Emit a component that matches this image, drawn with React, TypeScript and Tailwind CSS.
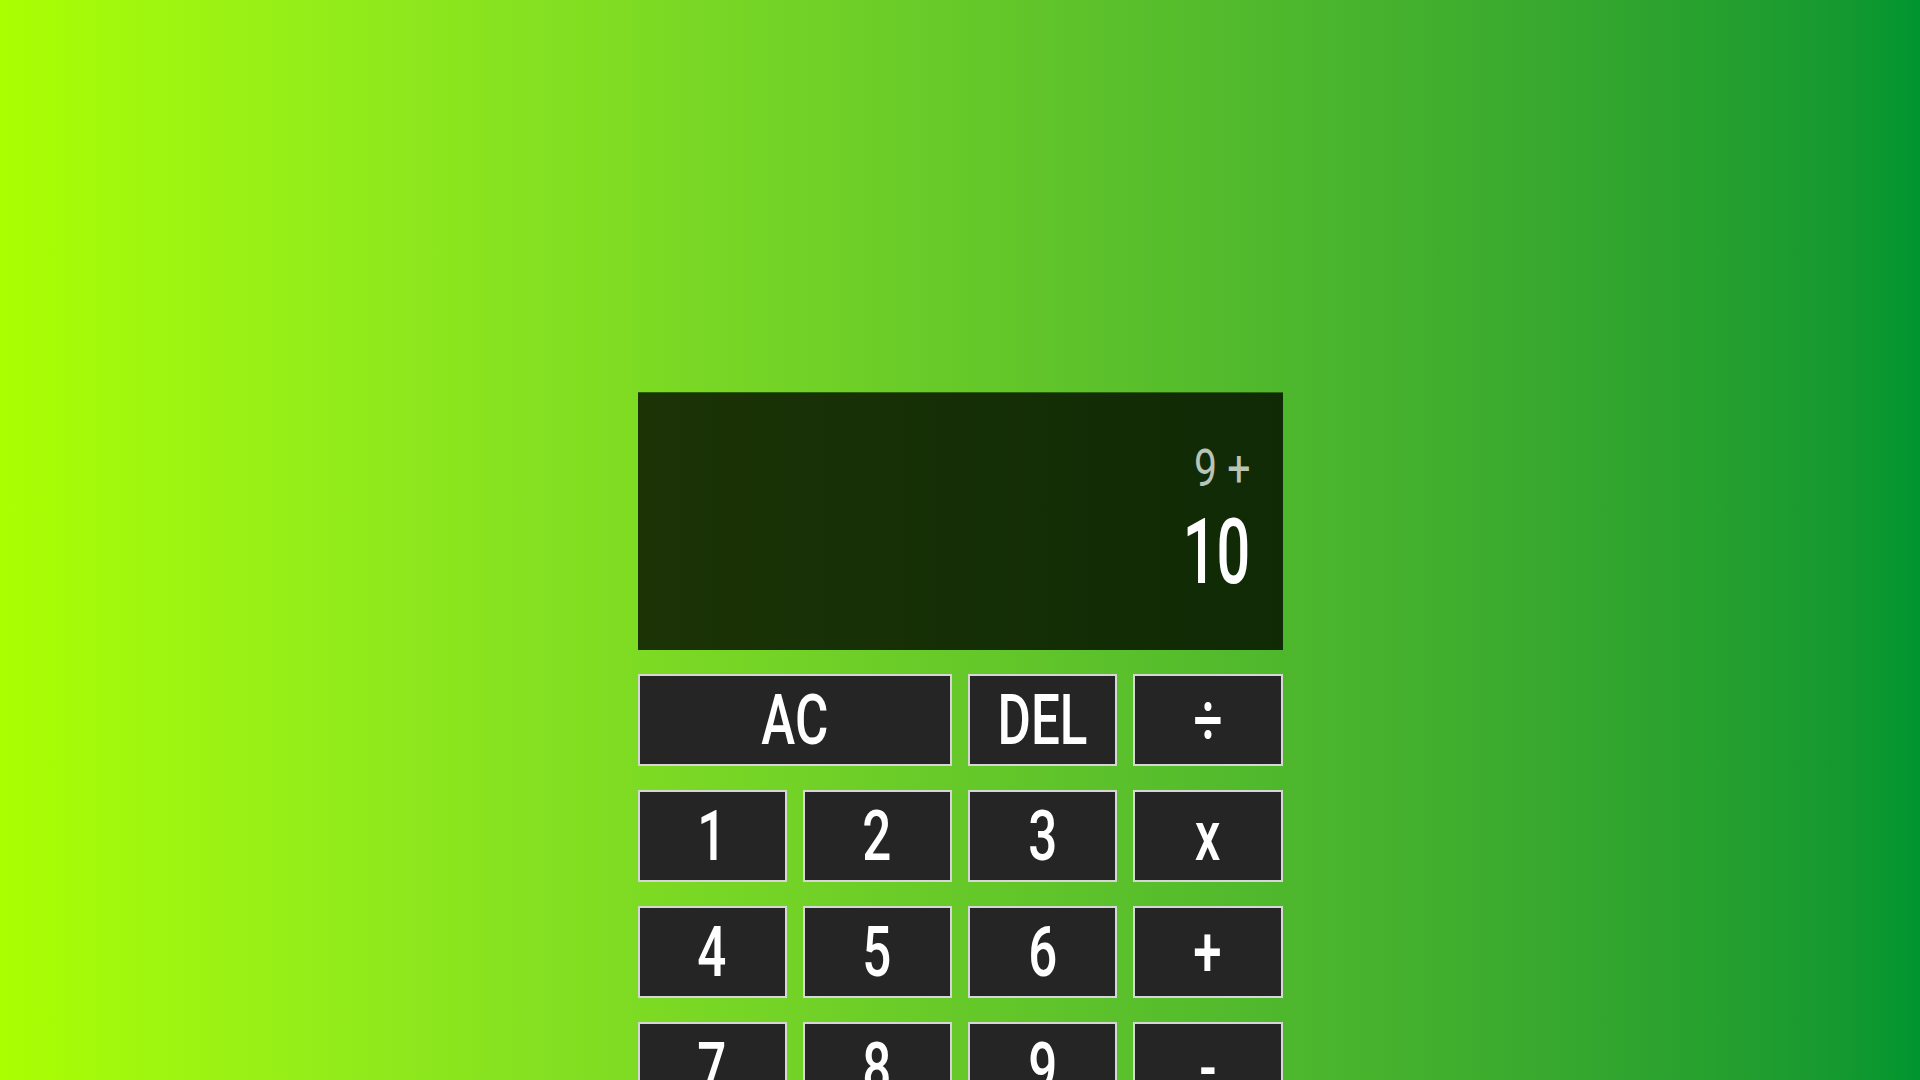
const keys: { label: string; wide?: boolean }[] = [
  { label: 'AC', wide: true },
  { label: 'DEL' },
  { label: '÷' },
  { label: '1' },
  { label: '2' },
  { label: '3' },
  { label: 'x' },
  { label: '4' },
  { label: '5' },
  { label: '6' },
  { label: '+' },
  { label: '7' },
  { label: '8' },
  { label: '9' },
  { label: '-' },
  { label: '.' },
  { label: '0' },
  { label: '=', wide: true },
];

const font = {
  fontFamily: 'Roboto, "Liberation Sans", Arial, sans-serif',
};

const App = () => {
  return (
    <div
      className="min-h-screen w-full bg-gradient-to-r from-[#aaff00] to-[#00952f] pt-[392px] pb-16"
      style={font}
    >
      <div className="w-[645px] mx-auto">
        {/* display */}
        <div className="h-[258px] bg-gradient-to-r from-[#1b3305] to-[#0f2a05] border-t border-[#2c620b] flex flex-col items-end pr-8 pt-[50px]">
          <span className="inline-block origin-right scale-x-[0.79] text-[52px] leading-none text-[#b9c4b5]">
            9 +
          </span>
          <span className="inline-block origin-right scale-x-[0.66] text-[90px] font-medium leading-none text-white mt-[13px]">
            10
          </span>
        </div>

        {/* keypad */}
        <div className="grid grid-cols-4 gap-x-4 gap-y-6 mt-6">
          {keys.map(k => (
            <button
              key={k.label}
              className={`h-[92px] bg-[#252525] border-2 border-[#d6d6d6] text-white text-[70px] font-medium leading-none flex items-center justify-center ${
                k.wide ? 'col-span-2' : ''
              }`}
            >
              <span className="inline-block scale-x-[0.73]">{k.label}</span>
            </button>
          ))}
        </div>
      </div>
    </div>
  );
};

export default App;
